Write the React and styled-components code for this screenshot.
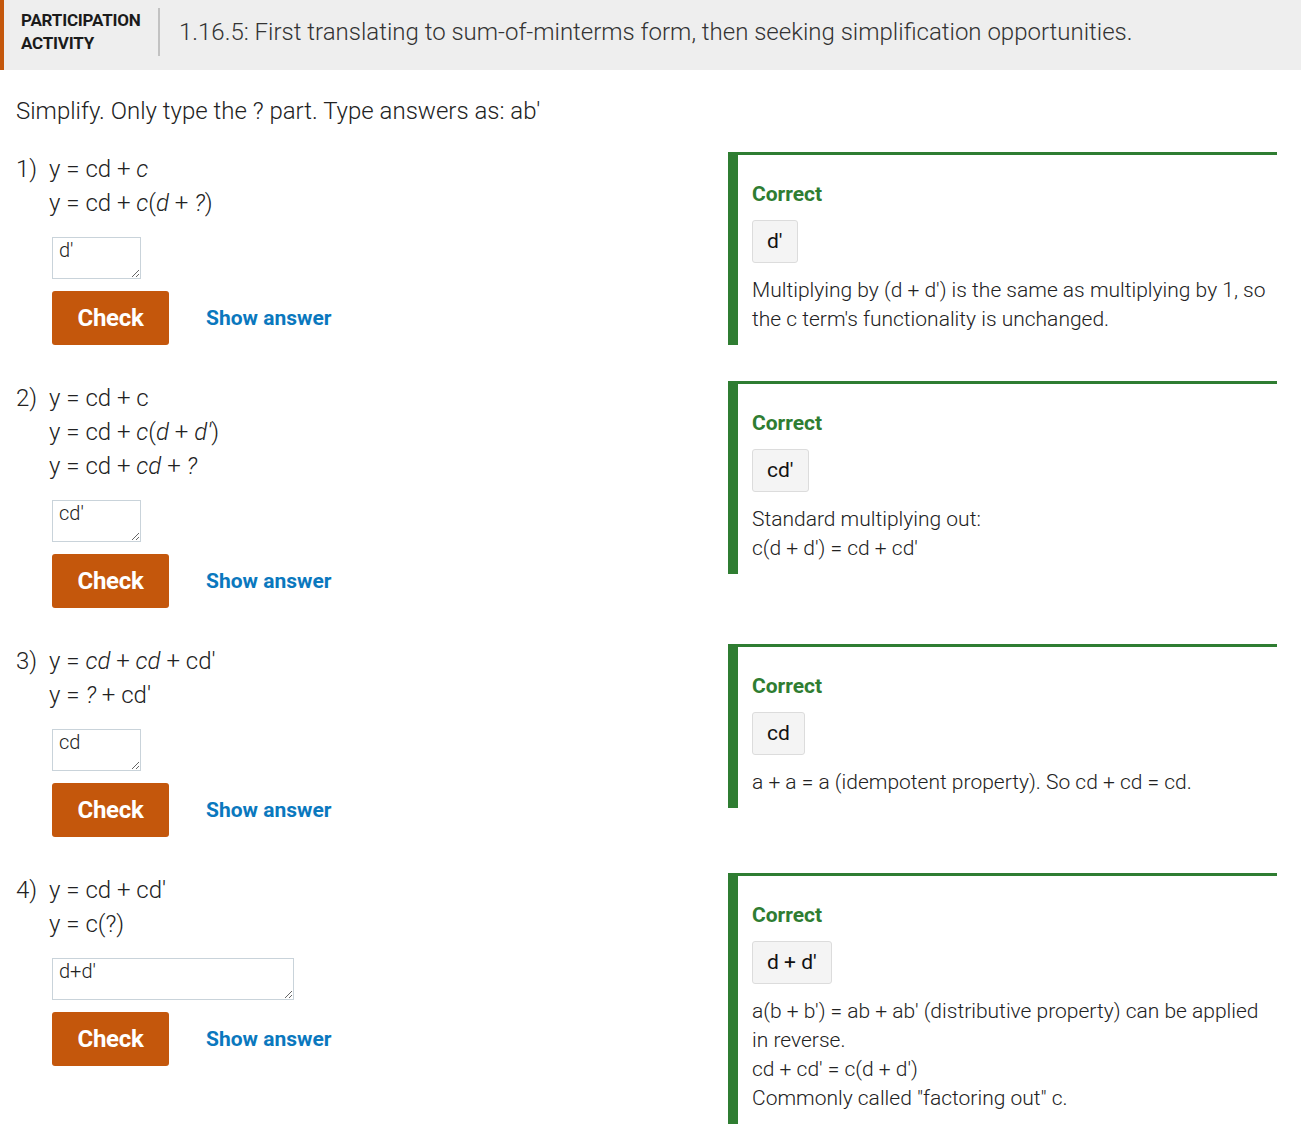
import React from "react";
import styled, { createGlobalStyle } from "styled-components";

const Global = createGlobalStyle`
  html, body { margin: 0; padding: 0; background: #fff; }
  body { font-family: Roboto, "Liberation Sans", Arial, sans-serif; color: #333; }
`;

const Page = styled.div`
  width: 1301px;
`;

const Header = styled.header`
  display: flex;
  align-items: center;
  height: 70px;
  background: #eeeeee;
  border-left: 4px solid #c4570c;
  box-sizing: border-box;
`;

const Kind = styled.div`
  width: 137px;
  padding-left: 17px;
  font-size: 17px;
  font-weight: 700;
  line-height: 23px;
  color: #1b1b1b;
  margin-top: -6px;
  letter-spacing: -0.2px;
`;

const Divider = styled.div`
  width: 2px;
  height: 48px;
  background: #c2c2c2;
  align-self: flex-start;
  margin-top: 8px;
`;

const Title = styled.h1`
  margin: 0 0 0 19px;
  font-size: 24px;
  font-weight: 300;
  color: #333;
  margin-top: -6px;
`;

const Body = styled.main`
  padding: 0 24px 0 16px;
`;

const Intro = styled.p`
  margin: 26px 0 27px;
  font-size: 24px;
  font-weight: 300;
  line-height: 30px;
  color: #222;
`;

const List = styled.div`
  display: flex;
  flex-direction: column;
  gap: 37px;
`;

const Row = styled.div`
  display: flex;
  align-items: flex-start;
  justify-content: space-between;
`;

const Question = styled.div`
  display: flex;
  margin-top: -1px;
`;

const Num = styled.div`
  width: 33px;
  font-size: 24px;
  font-weight: 300;
  line-height: 34px;
  color: #222;
`;

const Work = styled.div`
  display: flex;
  flex-direction: column;
`;

const Line = styled.div`
  font-size: 24px;
  font-weight: 300;
  line-height: 34px;
  color: #222;
  white-space: pre;
  i { font-style: italic; }
`;

const Answer = styled.textarea`
  margin: 17px 0 12px 3px;
  width: ${(p) => p.$w}px;
  height: 42px;
  box-sizing: border-box;
  border: 1px solid #c9d3da;
  border-radius: 0;
  padding: 0 6px;
  font-family: Roboto, "Liberation Sans", Arial, sans-serif;
  font-size: 20px;
  font-weight: 300;
  color: #222;
  line-height: 24px;
  resize: both;
  outline: none;
  overflow: hidden;
`;

const Actions = styled.div`
  display: flex;
  align-items: center;
  gap: 37px;
  margin-left: 3px;
`;

const CheckButton = styled.button`
  width: 117px;
  height: 54px;
  border: none;
  border-radius: 3px;
  background: #c4570c;
  color: #fff;
  font-family: Roboto, "Liberation Sans", Arial, sans-serif;
  font-size: 24px;
  font-weight: 700;
  letter-spacing: -0.3px;
  cursor: pointer;
`;

const ShowAnswer = styled.button`
  border: none;
  background: none;
  padding: 0;
  color: #0a78be;
  font-family: Roboto, "Liberation Sans", Arial, sans-serif;
  font-size: 21px;
  font-weight: 700;
  cursor: pointer;
`;

const Feedback = styled.div`
  width: 549px;
  box-sizing: border-box;
  margin-top: -1px;
  border-left: 10px solid #2f7d32;
  border-top: 3px solid #2f7d32;
  padding: 25px 10px 11px 14px;
`;

const Status = styled.div`
  font-size: 21px;
  font-weight: 700;
  line-height: 28px;
  color: #2f7d32;
`;

const Given = styled.div`
  display: inline-block;
  margin-top: 12px;
  padding: 8px 14px;
  background: #f4f4f4;
  border: 1px solid #dcdcdc;
  border-radius: 3px;
  font-size: 21px;
  font-weight: 400;
  line-height: 25px;
  color: #111;
`;

const Explain = styled.div`
  margin-top: 13px;
  font-size: 21px;
  font-weight: 300;
  line-height: 29px;
  color: #222;
`;

const ExplainLine = styled.div``;

const items = [
  {
    lines: [
      <>y = cd + <i>c</i></>,
      <>y = cd + <i>c</i>(<i>d</i> + <i>?</i>)</>,
    ],
    value: "d'",
    w: 89,
    given: "d'",
    explain: [
      "Multiplying by (d + d') is the same as multiplying by 1, so the c term's functionality is unchanged.",
    ],
  },
  {
    lines: [
      <>y = cd + c</>,
      <>y = cd + <i>c</i>(<i>d</i> + <i>d'</i>)</>,
      <>y = cd + <i>cd</i> + <i>?</i></>,
    ],
    value: "cd'",
    w: 89,
    given: "cd'",
    explain: ["Standard multiplying out:", "c(d + d') = cd + cd'"],
  },
  {
    lines: [
      <>y = <i>cd</i> + <i>cd</i> + cd'</>,
      <>y = <i>?</i> + cd'</>,
    ],
    value: "cd",
    w: 89,
    given: "cd",
    explain: ["a + a = a (idempotent property). So cd + cd = cd."],
  },
  {
    lines: [<>y = cd + cd'</>, <>y = c(?)</>],
    value: "d+d'",
    w: 242,
    given: "d + d'",
    explain: [
      "a(b + b') = ab + ab' (distributive property) can be applied in reverse.",
      "cd + cd' = c(d + d')",
      'Commonly called "factoring out" c.',
    ],
  },
];

export default function App() {
  return (
    <Page>
      <Global />
      <Header>
        <Kind>
          PARTICIPATION
          <br />
          ACTIVITY
        </Kind>
        <Divider />
        <Title>
          1.16.5: First translating to sum-of-minterms form, then seeking simplification opportunities.
        </Title>
      </Header>
      <Body>
        <Intro>Simplify. Only type the ? part. Type answers as: ab'</Intro>
        <List>
          {items.map((it, i) => (
            <Row key={i}>
              <Question>
                <Num>{i + 1})</Num>
                <Work>
                  {it.lines.map((l, j) => (
                    <Line key={j}>{l}</Line>
                  ))}
                  <Answer $w={it.w} defaultValue={it.value} />
                  <Actions>
                    <CheckButton>Check</CheckButton>
                    <ShowAnswer>Show answer</ShowAnswer>
                  </Actions>
                </Work>
              </Question>
              <Feedback>
                <Status>Correct</Status>
                <Given>{it.given}</Given>
                <Explain>
                  {it.explain.map((e, j) => (
                    <ExplainLine key={j}>{e}</ExplainLine>
                  ))}
                </Explain>
              </Feedback>
            </Row>
          ))}
        </List>
      </Body>
    </Page>
  );
}
